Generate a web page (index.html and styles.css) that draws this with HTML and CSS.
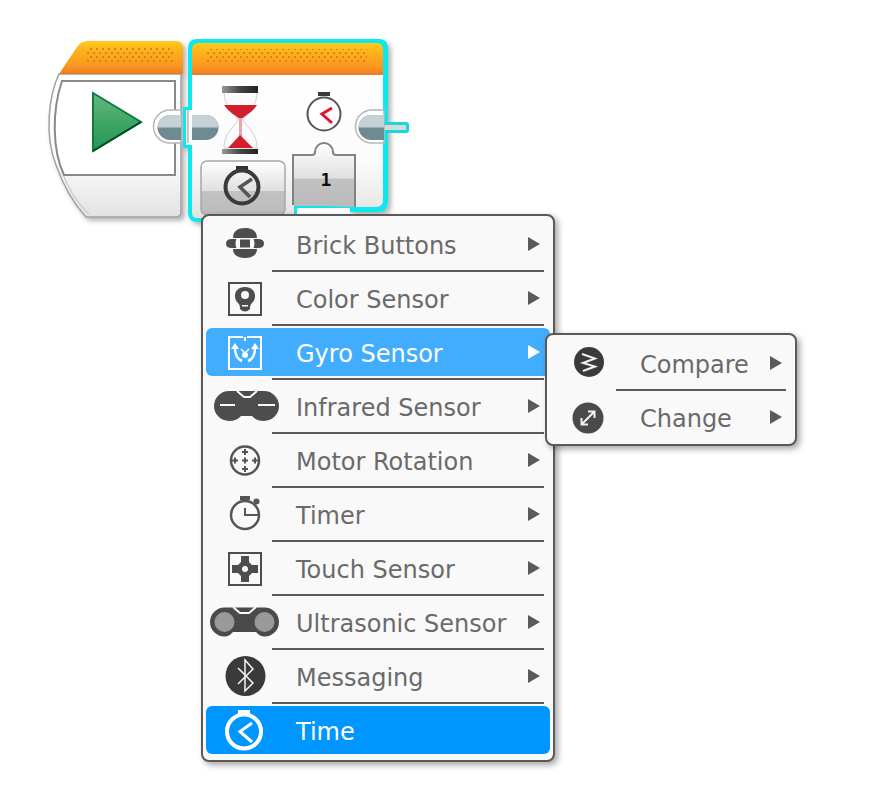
FILE: index.html
```html
<!DOCTYPE html>
<html lang="en">
<head>
<meta charset="utf-8">
<title>Wait block menu</title>
<link rel="stylesheet" href="styles.css">
</head>
<body>
<div class="canvas">
<svg class="blocks" width="420" height="230" viewBox="0 0 420 230">
  <defs>
    <linearGradient id="orange" x1="0" y1="0" x2="0" y2="1">
      <stop offset="0" stop-color="#ffcb1c"/><stop offset=".3" stop-color="#fdb11d"/><stop offset=".75" stop-color="#fb9620"/><stop offset="1" stop-color="#ec7c24"/>
    </linearGradient>
    <linearGradient id="body" x1="0" y1="0" x2="0" y2="1">
      <stop offset="0" stop-color="#ffffff"/><stop offset=".6" stop-color="#fbfbfb"/><stop offset=".85" stop-color="#ececec"/><stop offset="1" stop-color="#e2e2e2"/>
    </linearGradient>
    <linearGradient id="green" x1="0" y1="0" x2="0" y2="1">
      <stop offset="0" stop-color="#66b784"/><stop offset=".5" stop-color="#3fa766"/><stop offset="1" stop-color="#27955a"/>
    </linearGradient>
    <linearGradient id="plate" x1="0" y1="0" x2="0" y2="1">
      <stop offset="0" stop-color="#ffffff"/><stop offset=".55" stop-color="#e0e0e0"/><stop offset=".56" stop-color="#c2c2c2"/><stop offset="1" stop-color="#bbbbbb"/>
    </linearGradient>
    <linearGradient id="cap" x1="0" y1="0" x2="1" y2="0">
      <stop offset="0" stop-color="#999"/><stop offset=".5" stop-color="#444"/><stop offset="1" stop-color="#222"/>
    </linearGradient>
    <pattern id="dots" width="6" height="8" patternUnits="userSpaceOnUse">
      <rect width="2" height="2" fill="#d9831a"/>
      <rect x="3" y="4" width="2" height="2" fill="#d9831a"/>
    </pattern>
    <filter id="soft" x="-10%" y="-10%" width="125%" height="125%">
      <feDropShadow dx="3" dy="3" stdDeviation="2.500" flood-color="#000" flood-opacity=".3"/>
    </filter>
  </defs>

  <!-- start block -->
  <g filter="url(#soft)">
    <path d="M59 74C49 95 44 135 56 165C64 188 74 204 86 217H176Q181 217 181 212V74Z" fill="url(#body)" stroke="#a0a0a0" stroke-width="1.500"/>
    <path d="M59 74L77 47Q81 41 88 41H176Q183 41 183 48V74Z" fill="url(#orange)"/>
  </g>
  <path d="M62 172C68 188 78 204 89 214" fill="none" stroke="#cfcfcf" stroke-width="1.500"/>
  <rect x="87" y="48" width="87" height="15" fill="url(#dots)"/>
  <path d="M62 81H175V175H64C52 150 52 110 62 81Z" fill="#fff" stroke="#8a8a8a" stroke-width="2"/>
  <path d="M93 93L141 122L93 151Z" fill="url(#green)" stroke="#127a41" stroke-width="2" stroke-linejoin="miter"/>
  <path d="M93 151L141 122" stroke="#064a24" stroke-width="2"/>

  <!-- selected timer block outline -->
  <path d="M188 48Q188 39 197 39H379Q388 39 388 48V202Q388 212 378 212H350V208H297V222H198Q188 222 188 213V148H183V107H188Z" fill="#0fe8ee" filter="url(#soft)"/>
  <path d="M186 110V145H192V213Q192 218 197 218H294V206H352V207H376Q383 207 383 200V75H192V110Z" fill="url(#body)"/>
  <path d="M192 75V50Q192 43 199 43H376Q383 43 383 50V75Z" fill="url(#orange)"/>
  <rect x="207" y="49" width="160" height="15" fill="url(#dots)"/>
  <rect x="297" y="208" width="53" height="6" fill="#fff"/>

  <!-- connector between blocks -->
  <path d="M181 110H170A16.500 16.500 0 0 0 170 143H181Z" fill="#fff" stroke="#b5b5b5" stroke-width="1.500"/>
  <path d="M181 115H170A12.500 12.500 0 0 0 170 140H181Z" fill="#6f8b92"/>
  <path d="M181 115H170A12.500 12.500 0 0 0 157.500 127.500H181Z" fill="#c6d1d5"/>
  <path d="M188 110V143" stroke="#b5b5b5" stroke-width="1.500"/>
  <path d="M192 115H206A12.500 12.500 0 0 1 206 140H192Z" fill="#6f8b92"/>
  <path d="M192 115H206A12.500 12.500 0 0 1 218.500 127.500H192Z" fill="#c6d1d5"/>

  <!-- hourglass -->
  <path d="M224 92C224 108 234 112 238 120C234 128 224 132 224 148H257C257 132 247 128 243 120C247 112 257 108 257 92Z" fill="#fbfbfb" stroke="#d0d0d0"/>
  <path d="M224 105H257C251 114 243 116 241 120H240C238 116 230 114 224 105Z" fill="#d21f2e"/>
  <rect x="239" y="118" width="3" height="22" fill="#e8a6ac"/>
  <path d="M228 148L240 135L253 148Z" fill="#d21f2e"/>
  <rect x="222" y="86" width="36" height="7" fill="url(#cap)"/>
  <rect x="222" y="149" width="36" height="5" fill="url(#cap)"/>

  <!-- small clock -->
  <rect x="318" y="92" width="12" height="4" fill="#3a3a3a"/>
  <circle cx="324" cy="114" r="16.500" fill="#fff" stroke="#555" stroke-width="2"/>
  <path d="M332 108L322 114L332 123" fill="none" stroke="#e8112d" stroke-width="3"/>

  <!-- output connector -->
  <rect x="384" y="122" width="25" height="11" rx="3" fill="#14d9df"/>
  <rect x="383" y="125" width="23" height="5" fill="#d9d9d9"/>
  <path d="M384 110H372A16.500 16.500 0 0 0 372 143H384Z" fill="#fff" stroke="#b5b5b5" stroke-width="1.500"/>
  <path d="M384 115H371A12.500 12.500 0 0 0 371 140H384Z" fill="#6f8b92"/>
  <path d="M384 115H371A12.500 12.500 0 0 0 358.500 127.500H384Z" fill="#c6d1d5"/>

  <!-- number plate -->
  <path d="M293 205V155H312Q315 155 315 152A9 9 0 0 1 333 152Q333 155 336 155H355V207" fill="url(#plate)" stroke="#828282" stroke-width="2"/>
  <rect x="294" y="202" width="60" height="4" fill="#bbb"/>
  <text class="plate-num" x="326" y="186" text-anchor="middle">1</text>

  <!-- mode button -->
  <rect x="201" y="161" width="84" height="54" rx="6" fill="url(#plate)" stroke="#a8a8a8" stroke-width="1.500"/>
  <rect x="236" y="166" width="12" height="4" fill="#333"/>
  <circle cx="242" cy="187" r="16.500" fill="none" stroke="#3a3a3a" stroke-width="4"/>
  <path d="M252 179L240 187L250 197" fill="none" stroke="#555" stroke-width="3.500"/>
</svg>

<nav class="menu menu-main">
  <div class="row">
    <svg class="icon" viewBox="0 0 78 48"><path d="M27 18C27 11 32 8 39 8C46 8 51 11 51 18ZM27 29H51C51 35 46 38 39 38C32 38 27 35 27 29ZM30.500 19H26Q20 19 20 23.500Q20 28 26 28H30.500Q28.500 23.500 30.500 19ZM47.500 19H52Q58 19 58 23.500Q58 28 52 28H47.500Q49.500 23.500 47.500 19Z" fill="#4d4d4d"/><rect x="34" y="19.500" width="10" height="8" fill="#4d4d4d"/></svg>
    <span class="label">Brick Buttons</span><i class="arrow"></i>
  </div>
  <hr class="sep">
  <div class="row">
    <svg class="icon" viewBox="0 0 78 48"><rect x="23" y="9" width="32" height="32" fill="none" stroke="#4d4d4d" stroke-width="2"/><path d="M39 13C29 13 26 23 32 29C34 31 34 33 34 35Q39 40 44 35C44 33 44 31 46 29C52 23 49 13 39 13Z" fill="#4d4d4d"/><circle cx="39" cy="21" r="4" fill="#f9f9f9"/><rect x="36" y="31" width="6" height="1.500" fill="#f9f9f9"/></svg>
    <span class="label">Color Sensor</span><i class="arrow"></i>
  </div>
  <hr class="sep">
  <div class="row row-hover">
    <svg class="icon" viewBox="0 0 78 48"><path d="M37 9H23V41H55V9H41M39 9V13" fill="none" stroke="#fff" stroke-width="2"/><path d="M29 20C29 27 31 31 36 33M49 20C49 27 47 31 42 33" fill="none" stroke="#fff" stroke-width="2.500"/><path d="M25 21L29 15L33 21ZM45 21L49 15L53 21Z" fill="#fff"/><path d="M35 21L39 25L43 21" fill="none" stroke="#fff" stroke-width="1.500"/><circle cx="39" cy="27" r="3" fill="#fff"/></svg>
    <span class="label">Gyro Sensor</span><i class="arrow"></i>
  </div>
  <hr class="sep">
  <div class="row">
    <svg class="icon" viewBox="0 0 78 48"><path d="M23 9H58A15 15 0 0 1 58 39Q50 39 46 34H35Q31 39 23 39A15 15 0 0 1 23 9Z" fill="#4d4d4d"/><path d="M31 9L38 15H44L51 9M14 23H29M52 23H69" fill="none" stroke="#f9f9f9" stroke-width="2"/></svg>
    <span class="label">Infrared Sensor</span><i class="arrow"></i>
  </div>
  <hr class="sep">
  <div class="row">
    <svg class="icon" viewBox="0 0 78 48"><circle cx="39" cy="24.500" r="14" fill="none" stroke="#555" stroke-width="2.500"/><path d="M39 13V19M36 16H42M39 30V36M36 33H42M26 24.500H32M29 21.500V27.500M46 24.500H52M49 21.500V27.500M36 24.500H42M39 21.500V27.500" stroke="#555" stroke-width="2"/></svg>
    <span class="label">Motor Rotation</span><i class="arrow"></i>
  </div>
  <hr class="sep">
  <div class="row">
    <svg class="icon" viewBox="0 0 78 48"><circle cx="39" cy="25" r="14" fill="none" stroke="#555" stroke-width="2.500"/><rect x="34" y="6" width="10" height="4" fill="#555"/><circle cx="50.500" cy="11.500" r="3" fill="#555"/><path d="M39 18V25H52" fill="none" stroke="#555" stroke-width="2"/></svg>
    <span class="label">Timer</span><i class="arrow"></i>
  </div>
  <hr class="sep">
  <div class="row">
    <svg class="icon" viewBox="0 0 78 48"><rect x="23" y="9" width="32" height="32" fill="none" stroke="#4d4d4d" stroke-width="2"/><path d="M35 12H43V18L46 21H52V29H46L43 32V38H35V32L32 29H26V21H32L35 18Z" fill="#4d4d4d"/><circle cx="39" cy="25" r="3" fill="#f9f9f9"/></svg>
    <span class="label">Touch Sensor</span><i class="arrow"></i>
  </div>
  <hr class="sep">
  <div class="row">
    <svg class="icon" viewBox="0 0 78 48"><path d="M18.500 9.500H58.500A14.500 14.500 0 0 1 58.500 38.500Q54 38.500 50 34H27Q23 38.500 18.500 38.500A14.500 14.500 0 0 1 18.500 9.500Z" fill="#4a4a4a"/><path d="M27 9L34 15H43L50 9" fill="none" stroke="#f9f9f9" stroke-width="2"/><circle cx="18.500" cy="24" r="10" fill="#999"/><circle cx="58.500" cy="24" r="10" fill="#999"/></svg>
    <span class="label">Ultrasonic Sensor</span><i class="arrow"></i>
  </div>
  <hr class="sep">
  <div class="row">
    <svg class="icon" viewBox="0 0 78 48"><circle cx="39.500" cy="24" r="20" fill="#3a3a3a"/><path d="M32 16L47 31L39 39V8L47 17L32 32" fill="none" stroke="#f4f4f4" stroke-width="1.500"/></svg>
    <span class="label">Messaging</span><i class="arrow"></i>
  </div>
  <hr class="sep">
  <div class="row row-active">
    <svg class="icon" viewBox="0 0 78 48"><rect x="32" y="4" width="12" height="4" fill="#fff"/><circle cx="38" cy="25.500" r="17" fill="none" stroke="#fff" stroke-width="4"/><path d="M46 17L34 25.500L46 36" fill="none" stroke="#fff" stroke-width="3"/></svg>
    <span class="label">Time</span>
  </div>
</nav>

<nav class="menu menu-sub">
  <div class="row">
    <svg class="icon" viewBox="0 0 78 48"><circle cx="39" cy="23" r="15" fill="#3a3a3a"/><path d="M32 15L45 19.500L33 24L45 27.500L33 32" fill="none" stroke="#f0f0f0" stroke-width="2"/></svg>
    <span class="label">Compare</span><i class="arrow"></i>
  </div>
  <hr class="sep">
  <div class="row">
    <svg class="icon" viewBox="0 0 78 48"><circle cx="38" cy="25" r="15.500" fill="#4a4a4c"/><path d="M32 31L44 19M38 18.500H44.500V25M38 31.500H31.500V25" fill="none" stroke="#f0f0f0" stroke-width="2"/></svg>
    <span class="label">Change</span><i class="arrow"></i>
  </div>
</nav>
</div>
</body>
</html>
```

FILE: styles.css
```css
* { box-sizing: border-box; }
html, body { margin: 0; padding: 0; background: #fff; }
.canvas { position: relative; width: 881px; height: 804px; overflow: hidden; }
.blocks { position: absolute; left: 0; top: 0; }
.plate-num { font: 700 18px "DejaVu Sans Mono", monospace; fill: #111; }

.menu {
  position: absolute;
  display: flex;
  flex-direction: column;
  padding: 4px 3px 6px;
  background: #f9f9f9;
  border: 2px solid #5a5a5a;
  border-radius: 8px;
  box-shadow: 3px 3px 6px rgba(0, 0, 0, .35);
  font-family: "DejaVu Sans", sans-serif;
  font-size: 24px;
  color: #6a6a6a;
}
.menu-main { left: 201px; top: 214px; width: 354px; height: 548px; }
.menu-sub { left: 545px; top: 333px; width: 252px; height: 113px; padding-bottom: 5px; }

.row {
  display: flex;
  align-items: center;
  flex: 0 0 48px;
  height: 48px;
  padding-right: 10px;
  border-radius: 6px;
}
.row-hover { background: #42adff; color: #fff; }
.row-active { background: #0096ff; color: #fff; }
.icon { flex: 0 0 78px; width: 78px; height: 48px; }
.label { flex: 1; padding: 3px 0 0 12px; white-space: nowrap; }
.arrow {
  flex: none;
  width: 0;
  height: 0;
  border-left: 12px solid #5a5a5a;
  border-top: 7.5px solid transparent;
  border-bottom: 7.5px solid transparent;
}
.row-hover .arrow { border-left-color: #fff; }

.sep {
  flex: 0 0 2px;
  width: auto;
  height: 2px;
  margin: 2px 6px 2px 66px;
  border: 0;
  background: #5a5a5a;
}
```
